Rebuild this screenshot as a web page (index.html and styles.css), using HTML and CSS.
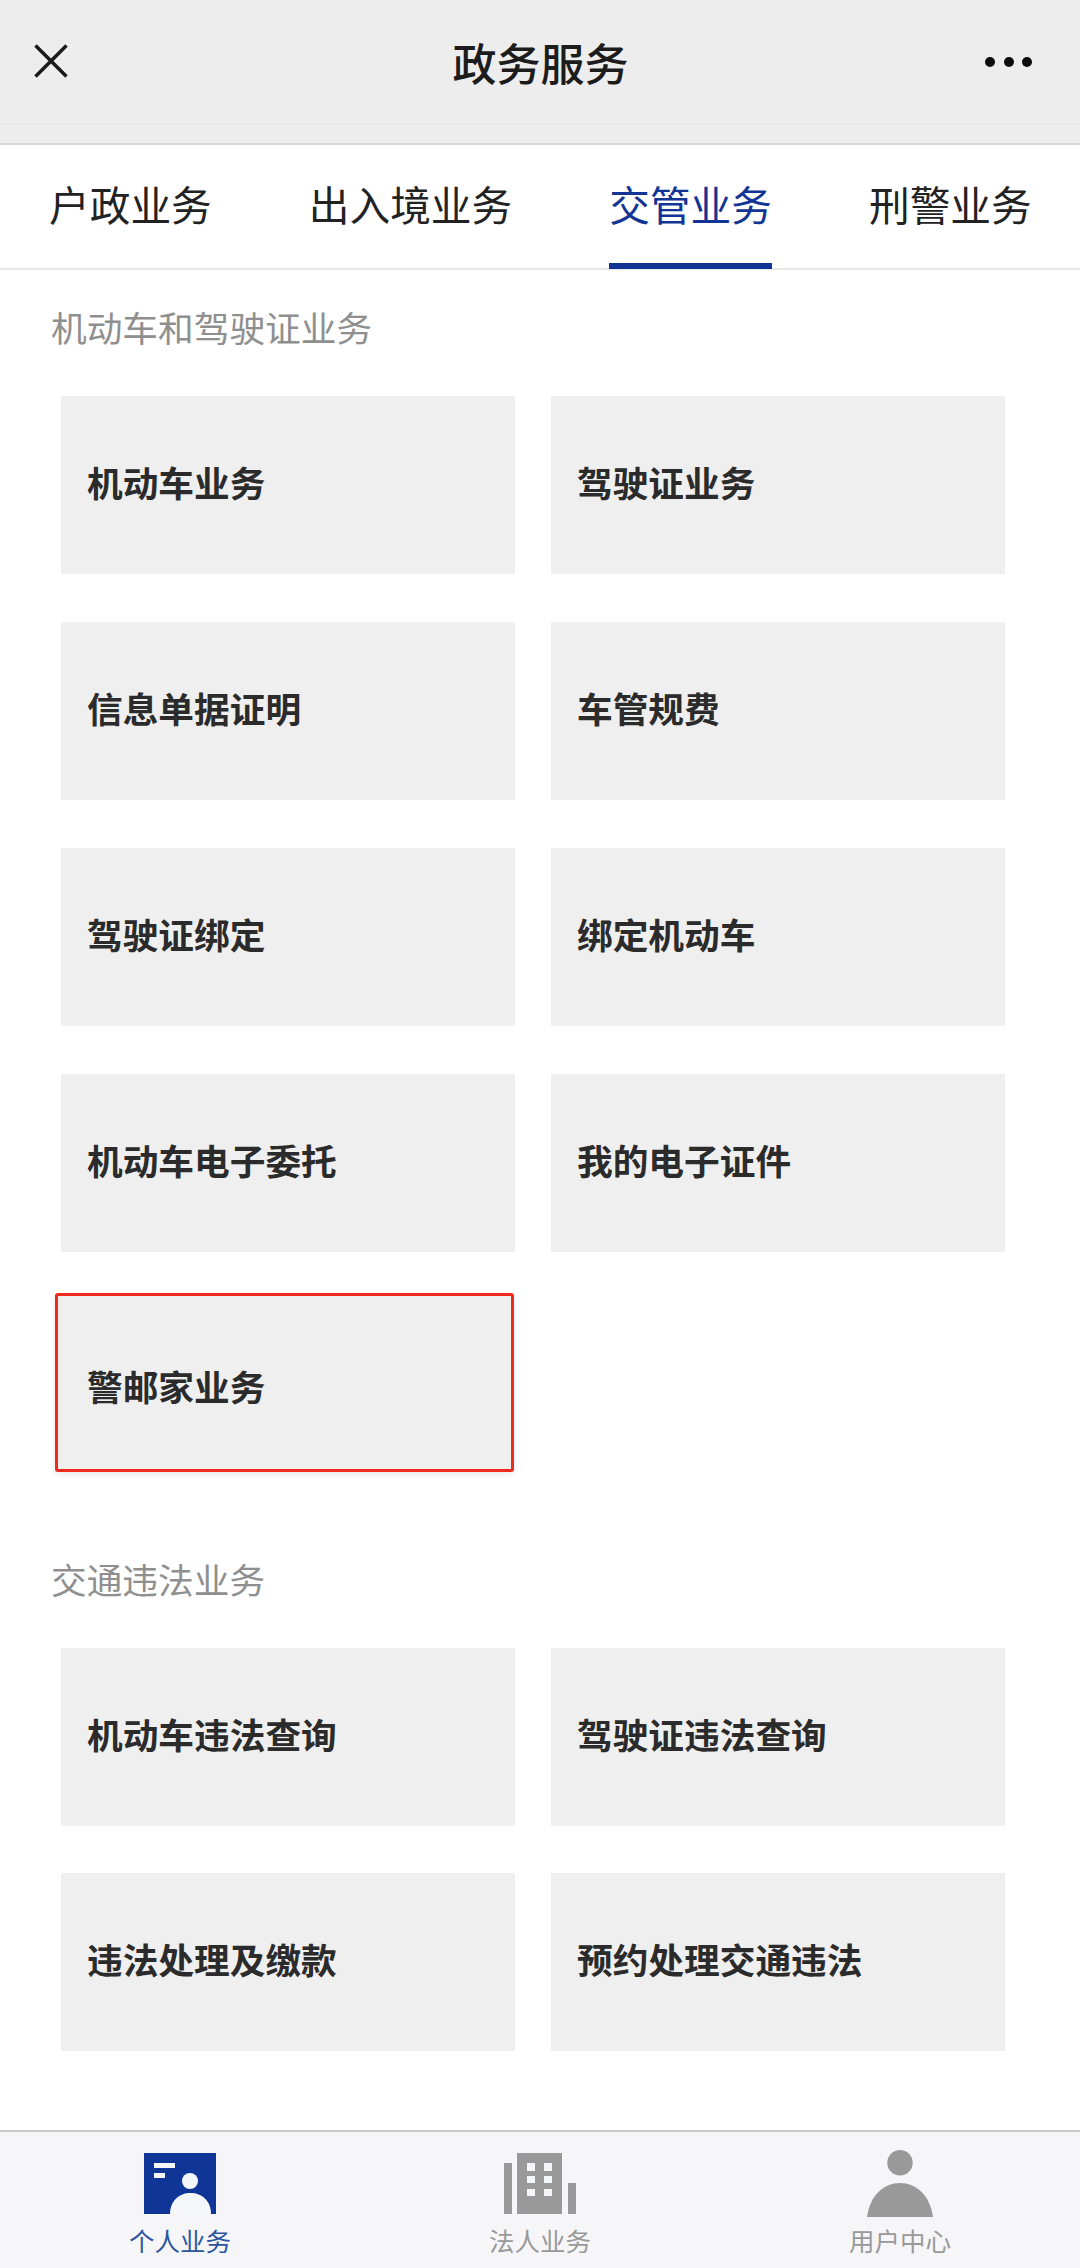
FILE: index.html
```html
<!DOCTYPE html>
<html lang="zh-CN">
<head>
  <title>政务服务</title>
  <meta charset="UTF-8">
  <meta name="viewport" content="width=device-width, initial-scale=1">
  <link rel="stylesheet" href="styles.css">
</head>
<body>
  <header class="topbar">
    <svg class="topbar-close" viewBox="0 0 34 34" width="34" height="34"><path d="M1.5 1.5 L32.5 32.5 M32.5 1.5 L1.5 32.5" /></svg>
    <div class="topbar-title">政务服务</div>
    <div class="topbar-more"><i></i><i></i><i></i></div>
  </header>

  <nav class="tabs">
    <a class="tab">户政业务</a>
    <a class="tab">出入境业务</a>
    <a class="tab tab-on">交管业务</a>
    <a class="tab">刑警业务</a>
  </nav>

  <main class="content">
    <h2 class="group-title">机动车和驾驶证业务</h2>
    <div class="cards">
      <div class="card">机动车业务</div>
      <div class="card">驾驶证业务</div>
      <div class="card">信息单据证明</div>
      <div class="card">车管规费</div>
      <div class="card">驾驶证绑定</div>
      <div class="card">绑定机动车</div>
      <div class="card">机动车电子委托</div>
      <div class="card">我的电子证件</div>
      <div class="card card-marked">警邮家业务</div>
    </div>

    <h2 class="group-title group-second">交通违法业务</h2>
    <div class="cards cards-tight">
      <div class="card">机动车违法查询</div>
      <div class="card">驾驶证违法查询</div>
      <div class="card">违法处理及缴款</div>
      <div class="card">预约处理交通违法</div>
    </div>
  </main>

  <footer class="tabbar">
    <div class="tabbar-item tabbar-on">
      <svg viewBox="0 0 72 61" width="72" height="61">
        <rect width="72" height="61" fill="#0f3597" />
        <rect x="10" y="10" width="21" height="5" fill="#f5f6fa" />
        <rect x="10" y="20" width="11" height="5" fill="#f5f6fa" />
        <circle cx="46" cy="28" r="8" fill="#f5f6fa" />
        <path d="M26 61 C26 48 35 40 46.500 40 C58 40 67 48 67 61 Z" fill="#f5f6fa" />
      </svg>
      <span>个人业务</span>
    </div>
    <div class="tabbar-item">
      <svg viewBox="0 0 72 61" width="72" height="61">
        <rect x="0" y="10" width="8" height="51" fill="#999" />
        <rect x="13" y="0" width="45" height="61" fill="#999" />
        <rect x="64" y="30" width="8" height="31" fill="#999" />
        <g fill="#f5f6fa">
          <rect x="23" y="10" width="8" height="8" /><rect x="40" y="10" width="8" height="8" />
          <rect x="23" y="23" width="8" height="7" /><rect x="40" y="23" width="8" height="7" />
          <rect x="23" y="36" width="8" height="7" /><rect x="40" y="36" width="8" height="7" />
        </g>
      </svg>
      <span>法人业务</span>
    </div>
    <div class="tabbar-item">
      <svg class="user-icon" viewBox="0 0 66 67" width="66" height="67">
        <circle cx="33" cy="12.700" r="12.700" fill="#999" />
        <path d="M0 67 C3 45 17 33 33 33 C49 33 63 45 66 67 Z" fill="#999" />
      </svg>
      <span>用户中心</span>
    </div>
  </footer>
</body>
</html>
```

FILE: styles.css
```css
* {
  box-sizing: border-box;
}
html, body {
  height: 100%;
}
body {
  background: #fff;
  color: #2b2b2b;
  display: flex;
  flex-direction: column;
  font-family: "Noto Sans CJK SC", "Noto Sans", sans-serif;
  margin: 0;
  overflow: hidden;
}

/* TOP BAR */
.topbar {
  align-items: flex-start;
  background: linear-gradient(#ededed 123px, #e7e7e7 123px, #e7e7e7 125px, #ededed 125px);
  border-bottom: 2px solid #d8d8d8;
  color: #1c1c1c;
  display: flex;
  flex: none;
  height: 145px;
  justify-content: space-between;
  padding: 44px 48px 0 34px;
}
.topbar-close {
  fill: none;
  stroke: #1a1a1a;
  stroke-width: 3.500;
}
.topbar-title {
  font-size: 44px;
  font-weight: 500;
  line-height: 40px;
  margin: -2px 0 0 28px;
}
.topbar-more {
  display: flex;
  gap: 8.500px;
  padding-top: 13px;
}
.topbar-more i {
  background: #0c0c0c;
  border-radius: 50%;
  height: 10px;
  width: 10px;
}

/* TABS */
.tabs {
  border-bottom: 2px solid #e8e8e8;
  color: #222;
  display: flex;
  flex: none;
  gap: 97px;
  height: 125px;
  padding-left: 49px;
}
.tab {
  border-bottom: 6px solid transparent;
  font-size: 40.700px;
  height: 124px;
  line-height: 117px;
}
.tab-on {
  border-bottom-color: #123494;
  color: #123494;
}

/* GROUPS */
.content {
  flex: 1;
  padding: 0 0 0 61px;
}
.group-title {
  color: #8f8f8f;
  font-size: 35.700px;
  font-weight: 400;
  line-height: 50px;
  margin: 32px 0 44px -10px;
}
.group-second {
  margin: 76px 0 44px -10px;
}
.cards {
  display: grid;
  gap: 48px 36px;
  grid-template-columns: 454px 454px;
}
.cards-tight {
  row-gap: 47px;
}
.card {
  align-items: center;
  background: #efefef;
  display: flex;
  font-size: 35.700px;
  font-weight: 700;
  height: 178px;
  padding: 0 0 7px 26px;
}
.card-marked {
  border: 3px solid #ee2a1e;
  border-radius: 3px;
  box-shadow: 0 3px 6px rgba(0, 0, 0, .08);
  height: 179px;
  margin: -7px 1px 6px -6px;
  padding: 6px 0 0 29px;
}

/* BOTTOM BAR */
.tabbar {
  background: #f6f6f9;
  border-top: 2px solid #c8c8cc;
  display: flex;
  flex: none;
  height: 138px;
  padding-top: 21px;
}
.tabbar-item {
  align-items: center;
  color: #999;
  display: flex;
  flex: 1;
  flex-direction: column;
  font-size: 25.500px;
  gap: 8px;
}
.tabbar-on {
  color: #2c569f;
}
.tabbar-item span {
  line-height: 36px;
}
.user-icon {
  margin: -3px 0 -3px;
}
```
